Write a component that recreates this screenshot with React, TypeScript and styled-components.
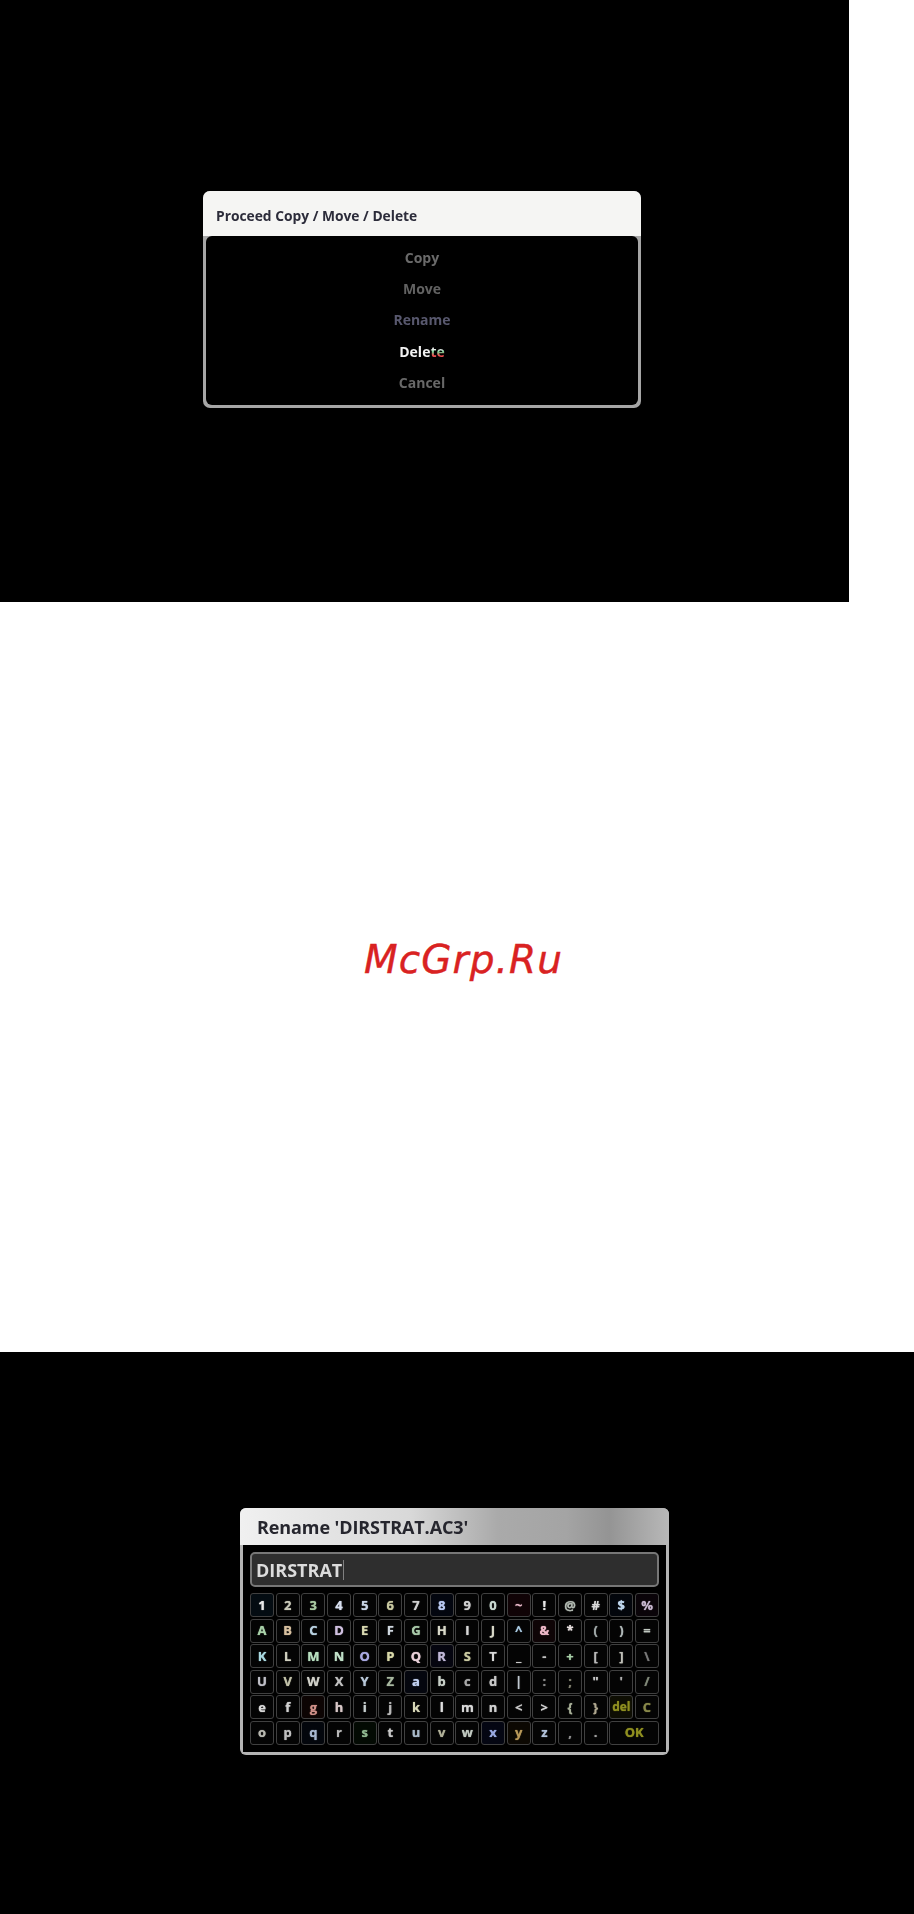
import React from "react";
import styled, { createGlobalStyle } from "styled-components";

const GlobalStyle = createGlobalStyle`
  html, body {
    margin: 0;
    padding: 0;
    background: #fff;
  }
`;

const MENU_ITEMS = [
  { label: "Copy", color: "#6a6a6a" },
  { label: "Move", color: "#626262" },
  { label: "Rename", color: "#58586e" },
  { label: "Cancel", color: "#686868" },
];

type KeyDef = { label: string; color?: string; bg?: string; wide?: boolean };

const k = (label: string, color?: string, bg?: string): KeyDef => ({ label, color, bg });

const KEYS: KeyDef[] = [
  k("1", "#e8e8e8", "#040c12"), k("2", "#c8c8b8"), k("3", "#a8c8a0"), k("4", "#d8e0f0"),
  k("5", "#c8d4e4"), k("6", "#c8c8a0"), k("7", "#d0d0d0"), k("8", "#b8c8f0", "#03060f"),
  k("9", "#d0d0d0"), k("0", "#c8d8d0"), k("~", "#e8b8c8", "#100306"), k("!", "#e8e8e8"),
  k("@", "#b0b8b0"), k("#", "#d8d8d8"), k("$", "#c0d8f0", "#03060c"), k("%", "#c8b8d0", "#0a0409"),

  k("A", "#a8d0a8"), k("B", "#d8c0a0"), k("C", "#b8d0e0"), k("D", "#d0c0e0"),
  k("E", "#d8d8b0"), k("F", "#d0d8e0"), k("G", "#a8c8a8"), k("H", "#d8d8c8"),
  k("I", "#d8d8d8"), k("J", "#d8d8c8"), k("^", "#a8c8e0"), k("&", "#f0b8c8", "#0e0406"),
  k("*", "#e8e0e0"), k("(", "#a0a8a8"), k(")", "#b0b8b8"), k("=", "#c0c8c0"),

  k("K", "#a8d8e0"), k("L", "#d0d0c0"), k("M", "#b8e0c0"), k("N", "#c0e0c8"),
  k("O", "#a8a8e0"), k("P", "#d8d8a8"), k("Q", "#e8d0d8"), k("R", "#c0b8d8", "#05050f"),
  k("S", "#c8c8a0"), k("T", "#d8d8d8"), k("_", "#d0d0d0"), k("-", "#c0c0c0"),
  k("+", "#a8d0a8"), k("[", "#b8b8b8"), k("]", "#c0c0b8"), k("\\", "#787878"),

  k("U", "#c0c0c8"), k("V", "#c0c0a8"), k("W", "#d0d0c8"), k("X", "#c0c0c0"),
  k("Y", "#b8c8d8"), k("Z", "#a8b8a0"), k("a", "#c0d0f0", "#04060e"), k("b", "#c8d0c8"),
  k("c", "#a8a8a8"), k("d", "#c8c8c8"), k("|", "#c0c8d0"), k(":", "#888888"),
  k(";", "#808070"), k('"', "#c8c8c8"), k("'", "#b0b0b0"), k("/", "#808878"),

  k("e", "#d8d8d8"), k("f", "#d0d0d0"), k("g", "#d09088", "#0c0403"), k("h", "#d8c8c8"),
  k("i", "#c8d0d0"), k("j", "#b8b8b8"), k("k", "#d8d8b8"), k("l", "#e0e0e0"),
  k("m", "#d8d8d8"), k("n", "#d0d0d0"), k("<", "#c8c8c8"), k(">", "#d0d0d0"),
  k("{", "#a8b098"), k("}", "#b0a890"), k("del", "#8f8f20", "#0e0e03"), k("C", "#88884a"),

  k("o", "#b8b8b0"), k("p", "#c0c0c0"), k("q", "#a8b8d0", "#03060c"), k("r", "#b8b8b8"),
  k("s", "#90b890", "#030a03"), k("t", "#c8c8c8"), k("u", "#a8b8c8"), k("v", "#b0b098"),
  k("w", "#c0c8c0"), k("x", "#98a8e0", "#040612"), k("y", "#b89858", "#0c0802"), k("z", "#b0c0d8"),
  k(",", "#909090"), k(".", "#a0a0a0"), { label: "OK", color: "#8f8f20", wide: true },
];

export default function App() {
  return (
    <Page>
      <GlobalStyle />
      <MenuScreen>
        <Dialog>
          <DialogHeader>Proceed Copy / Move / Delete</DialogHeader>
          <MenuList>
            {MENU_ITEMS.slice(0, 3).map((item) => (
              <MenuItem key={item.label} $color={item.color}>{item.label}</MenuItem>
            ))}
            <MenuItem $color="#f2f2f2">
              Dele<DeleteTail>te</DeleteTail>
            </MenuItem>
            <MenuItem $color={MENU_ITEMS[3].color}>{MENU_ITEMS[3].label}</MenuItem>
          </MenuList>
        </Dialog>
      </MenuScreen>
      <Watermark>McGrp.Ru</Watermark>
      <KeyboardScreen>
        <KeyboardDialog>
          <KeyboardHeader>Rename 'DIRSTRAT.AC3'</KeyboardHeader>
          <KeyboardBody>
            <NameField>
              <NameText>DIRSTRAT</NameText>
              <Caret />
            </NameField>
            <KeyGrid>
              {KEYS.map((key, i) => (
                <Key key={i} $color={key.color} $bg={key.bg} $wide={key.wide}>
                  <KeyLabel $small={key.label === "del"}>{key.label}</KeyLabel>
                </Key>
              ))}
            </KeyGrid>
          </KeyboardBody>
        </KeyboardDialog>
      </KeyboardScreen>
    </Page>
  );
}

const Page = styled.div`
  width: 914px;
  height: 1914px;
  display: flex;
  flex-direction: column;
  background: #fff;
  overflow: hidden;
  font-family: "Open Sans", "Noto Sans", sans-serif;
`;

const MenuScreen = styled.div`
  width: 849px;
  height: 602px;
  padding: 191px 0 0 203px;
  box-sizing: border-box;
  background: #000;
`;

const Dialog = styled.div`
  width: 438px;
  height: 217px;
  display: flex;
  flex-direction: column;
  border-radius: 7px;
  background: #a6a6a6;
  overflow: hidden;
`;

const DialogHeader = styled.div`
  height: 45px;
  flex-shrink: 0;
  box-sizing: border-box;
  display: flex;
  align-items: center;
  padding: 3px 0 0 13px;
  font-size: 13.8px;
  font-weight: 700;
  color: #2c2c3a;
  background: #f5f5f3;
  filter: blur(0.4px);
`;

const MenuList = styled.div`
  flex: 1;
  display: flex;
  flex-direction: column;
  align-items: center;
  justify-content: center;
  margin: 0 3px 3px;
  padding-bottom: 1px;
  border-radius: 6px;
  background: #000;
`;

const MenuItem = styled.div<{ $color: string }>`
  height: 31.2px;
  line-height: 31.2px;
  font-size: 14px;
  font-weight: 700;
  color: ${(p) => p.$color};
  filter: blur(0.6px);
`;

const DeleteTail = styled.span`
  background: linear-gradient(#f0f0f0 38%, #70d090 52%, #e85050 70%);
  -webkit-background-clip: text;
  background-clip: text;
  color: transparent;
`;

const Watermark = styled.div`
  height: 750px;
  display: flex;
  align-items: center;
  justify-content: center;
  padding: 0 0 36px 13px;
  box-sizing: border-box;
  font-family: "DejaVu Sans", sans-serif;
  font-style: italic;
  font-size: 39px;
  letter-spacing: 1.1px;
  color: #d92222;
  -webkit-text-stroke: 0.4px #d92222;
`;

const KeyboardScreen = styled.div`
  flex: 1;
  padding: 156px 0 0 240px;
  background: #000;
`;

const KeyboardDialog = styled.div`
  width: 429px;
  height: 247px;
  display: flex;
  flex-direction: column;
  border-radius: 6px;
  background: #b4b4b4;
  overflow: hidden;
`;

const KeyboardHeader = styled.div`
  height: 37px;
  flex-shrink: 0;
  box-sizing: border-box;
  display: flex;
  align-items: center;
  padding: 1px 0 0 17px;
  font-size: 18px;
  font-weight: 700;
  letter-spacing: -0.1px;
  color: #26262e;
  background: linear-gradient(90deg, #f0f0f0 0%, #d8d8d8 40%, #aaaaaa 60%, #a4a4a4 76%, #949494 86%, #b8b8b8 100%);
  filter: blur(0.4px);
`;

const KeyboardBody = styled.div`
  flex: 1;
  display: flex;
  flex-direction: column;
  gap: 6px;
  margin: 0 3px 3px;
  padding: 7px 7px 0 7px;
  background: #000;
`;

const NameField = styled.div`
  height: 35px;
  box-sizing: border-box;
  display: flex;
  align-items: center;
  padding-left: 4px;
  border: 2px solid #777;
  border-radius: 5px;
  background: #2e2e2e;
`;

const NameText = styled.span`
  font-size: 18px;
  font-weight: 700;
  color: #dcdcdc;
  filter: blur(0.5px);
`;

const Caret = styled.span`
  width: 1px;
  height: 20px;
  margin-left: 1px;
  background: #808080;
`;

const KeyGrid = styled.div`
  display: grid;
  grid-template-columns: repeat(16, 1fr);
  grid-auto-rows: 24px;
  gap: 1.6px 1.7px;
`;

const Key = styled.div<{ $color?: string; $bg?: string; $wide?: boolean }>`
  grid-column: ${(p) => (p.$wide ? "span 2" : "auto")};
  box-sizing: border-box;
  display: flex;
  align-items: center;
  justify-content: center;
  border: 1px solid #404040;
  border-radius: 3px;
  background: ${(p) => p.$bg ?? "#040404"};
  color: ${(p) => p.$color ?? "#c8c8c8"};
`;

const KeyLabel = styled.span<{ $small?: boolean }>`
  font-size: ${(p) => (p.$small ? "12px" : "13px")};
  font-weight: 700;
  line-height: 1;
  text-shadow: 0 0 1px currentColor;
  filter: blur(0.6px);
`;
